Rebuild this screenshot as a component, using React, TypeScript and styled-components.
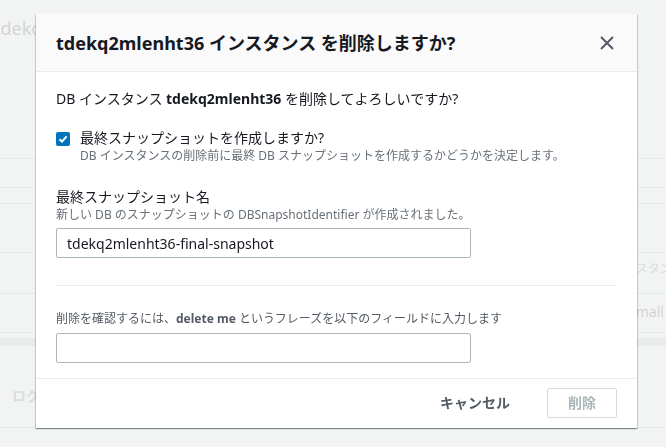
import React from "react";
import styled, { createGlobalStyle } from "styled-components";

const GlobalStyle = createGlobalStyle`
  html, body {
    margin: 0;
    padding: 0;
  }
  body {
    background: #f2f3f3;
    font-family: "Noto Sans", "Noto Sans CJK JP", sans-serif;
    color: #16191f;
    overflow: hidden;
  }
  * {
    box-sizing: border-box;
  }
`;

// page behind the modal
const SPage = styled.div`
  width: 666px;
  height: 447px;
  overflow: hidden;
`;
const SCrumb = styled.h1`
  margin: 0 0 0 -6px;
  padding-top: 17px;
  height: 159px;
  font-size: 18px;
  line-height: 22px;
  font-weight: 400;
  white-space: nowrap;
  border-bottom: 1px solid #aab7b8;
`;
const SBgRow = styled.div<{ $h: number; $line?: string; $indent?: number; $top?: number }>`
  height: ${(p) => p.$h}px;
  border-bottom: ${(p) => (p.$line ? `1px solid ${p.$line}` : "none")};
  padding: ${(p) => p.$top ?? 0}px 0 0 ${(p) => p.$indent ?? 0}px;
  font-size: 14px;
  line-height: 20px;
  white-space: nowrap;
`;
const SBgBar = styled.div`
  height: 8px;
  margin-top: 5px;
  background: #b8bfbf;
`;
const SBgTab = styled.span`
  font-weight: 700;
  color: #545b64;
`;
const SBgSmall = styled.span`
  font-size: 12px;
  color: #545b64;
`;

// modal
const SBackdrop = styled.div`
  position: fixed;
  inset: 0;
  background: rgba(242, 243, 243, 0.85);
  display: flex;
  align-items: flex-start;
  padding: 14px 0 0 36px;
`;
const SModal = styled.div`
  width: 601px;
  background: #fff;
  box-shadow: 0 1px 1px 0 rgba(0, 28, 36, 0.3), 1px 1px 1px 0 rgba(0, 28, 36, 0.15),
    -1px 1px 1px 0 rgba(0, 28, 36, 0.15);
  display: flex;
  flex-direction: column;
`;
const SHeader = styled.div`
  display: flex;
  align-items: center;
  justify-content: space-between;
  padding: 18px 22px 17px 20px;
  background: #fafafa;
  border-bottom: 1px solid #eaeded;
`;
const STitle = styled.h2`
  margin: 0;
  font-size: 18px;
  line-height: 22px;
  font-weight: 700;
  color: #16191f;
`;
const SClose = styled.button`
  width: 16px;
  height: 16px;
  padding: 0;
  border: none;
  background: none;
  display: flex;
  color: #545b64;
`;
const SBody = styled.div`
  padding: 17px 20px 15px;
  display: flex;
  flex-direction: column;
`;
const SText = styled.p`
  margin: 0;
  font-size: 14px;
  line-height: 20px;
`;
const SCheckRow = styled.label`
  display: flex;
  gap: 10px;
  margin-top: 19px;
`;
const SCheckBox = styled.span`
  flex: none;
  width: 14px;
  height: 14px;
  margin-top: 4px;
  border-radius: 2px;
  background: #0073bb;
  display: flex;
  align-items: center;
  justify-content: center;
`;
const SCheckText = styled.div`
  display: flex;
  flex-direction: column;
`;
const SHint = styled.span<{ $tone?: string }>`
  font-size: 12px;
  line-height: 16px;
  color: ${(p) => p.$tone ?? "#687078"};
  b {
    font-weight: 700;
  }
`;
const SField = styled.div<{ $gap: number }>`
  display: flex;
  flex-direction: column;
  margin-top: ${(p) => p.$gap}px;
`;
const SInput = styled.input<{ $gap: number }>`
  width: 415px;
  height: 30px;
  margin-top: ${(p) => p.$gap}px;
  padding: 4px 10px;
  border: 1px solid #aab7b8;
  border-radius: 2px;
  font-family: inherit;
  font-size: 14px;
  color: #16191f;
  outline: none;
`;
const SDivider = styled.hr`
  margin: 27px 0 0;
  border: none;
  border-top: 1px solid #eaeded;
`;
const SFooter = styled.div`
  display: flex;
  justify-content: flex-end;
  gap: 16px;
  padding: 9px 20px 10px;
  border-top: 1px solid #eaeded;
`;
const SButton = styled.button<{ $variant: "link" | "disabled" }>`
  height: 30px;
  padding: 4px 20px;
  border-radius: 2px;
  font-family: inherit;
  font-size: 14px;
  line-height: 20px;
  font-weight: 700;
  background: #fff;
  border: 1px solid ${(p) => (p.$variant === "disabled" ? "#d5dbdb" : "transparent")};
  color: ${(p) => (p.$variant === "disabled" ? "#aab7b8" : "#545b64")};
`;

const App = () => {
  return (
    <>
      <GlobalStyle />
      <SPage>
        <SCrumb>tdekq2mlenht36</SCrumb>
        <SBgRow $h={29} $line="#aab7b8" />
        <SBgRow $h={16} $line="#aab7b8" />
        <SBgRow $h={49} $line="#aab7b8" />
        <SBgRow $h={41} $line="#44b9d6" $indent={612} $top={5}>
          <SBgSmall>インスタンスクラス</SBgSmall>
        </SBgRow>
        <SBgRow $h={39} $line="#aab7b8" $indent={629} $top={8}>
          small
        </SBgRow>
        <SBgBar />
        <SBgRow $h={82} $line="#aab7b8" $indent={12} $top={40}>
          <SBgTab>ログとイベント</SBgTab>
        </SBgRow>
      </SPage>
      <SBackdrop>
        <SModal>
          <SHeader>
            <STitle>tdekq2mlenht36 インスタンス を削除しますか?</STitle>
            <SClose aria-label="閉じる">
              <svg width="16" height="16" viewBox="0 0 16 16">
                <path d="M2 2 L14 14 M14 2 L2 14" stroke="currentColor" strokeWidth="2" fill="none" />
              </svg>
            </SClose>
          </SHeader>
          <SBody>
            <SText>
              DB インスタンス <b>tdekq2mlenht36</b> を削除してよろしいですか?
            </SText>
            <SCheckRow>
              <SCheckBox>
                <svg width="10" height="10" viewBox="0 0 10 10">
                  <path d="M1.5 5.2 L4 7.6 L8.6 2.4" stroke="#fff" strokeWidth="2" fill="none" />
                </svg>
              </SCheckBox>
              <SCheckText>
                <SText>最終スナップショットを作成しますか?</SText>
                <SHint>DB インスタンスの削除前に最終 DB スナップショットを作成するかどうかを決定します。</SHint>
              </SCheckText>
            </SCheckRow>
            <SField $gap={23}>
              <SText>最終スナップショット名</SText>
              <SHint>新しい DB のスナップショットの DBSnapshotIdentifier が作成されました。</SHint>
              <SInput $gap={5} defaultValue="tdekq2mlenht36-final-snapshot" />
            </SField>
            <SDivider />
            <SField $gap={25}>
              <SHint $tone="#545b64">
                削除を確認するには、<b>delete me</b> というフレーズを以下のフィールドに入力します
              </SHint>
              <SInput $gap={6} />
            </SField>
          </SBody>
          <SFooter>
            <SButton $variant="link">キャンセル</SButton>
            <SButton $variant="disabled">削除</SButton>
          </SFooter>
        </SModal>
      </SBackdrop>
    </>
  );
};

export default App;
